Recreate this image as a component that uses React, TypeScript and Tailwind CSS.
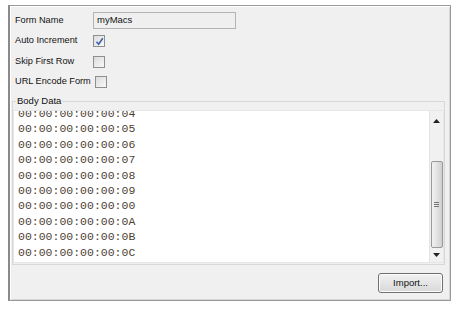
const macs = [
  '00:00:00:00:00:04',
  '00:00:00:00:00:05',
  '00:00:00:00:00:06',
  '00:00:00:00:00:07',
  '00:00:00:00:00:08',
  '00:00:00:00:00:09',
  '00:00:00:00:00:00',
  '00:00:00:00:00:0A',
  '00:00:00:00:00:0B',
  '00:00:00:00:00:0C',
];

function CheckBox({ checked }: { checked?: boolean }) {
  return (
    <div className="w-[12px] h-[12px] border border-[#8e8f8f] bg-gradient-to-br from-[#dcdcdc] to-[#f8f8f8] flex items-center justify-center">
      {checked && (
        <svg width="9" height="9" viewBox="0 0 9 9">
          <path d="M1.5 4.8 L3.6 7.2 L7.8 1.2" fill="none" stroke="#3b5ea8" strokeWidth="1.5" />
        </svg>
      )}
    </div>
  );
}

function Row({ label, children, h }: { label: string; children: React.ReactNode; h: string }) {
  return (
    <div className={`flex items-center ${h}`}>
      <div className="min-w-[78px] shrink-0 whitespace-nowrap pr-[4px] text-[9.2px] text-[#111]">{label}</div>
      {children}
    </div>
  );
}

function ScrollBar() {
  return (
    <div className="w-[14px] bg-[#f1f1f1] border-l border-[#e4e4e4] flex flex-col items-center">
      <div className="h-[19px] flex items-center justify-center">
        <svg width="7" height="4" viewBox="0 0 7 4">
          <path d="M0 4 L3.5 0 L7 4 Z" fill="#222" />
        </svg>
      </div>
      <div className="h-[31px]" />
      <div className="w-[12px] h-[87px] rounded-[2px] border border-[#999] bg-gradient-to-r from-[#f2f2f2] via-[#e2e2e2] to-[#cfcfcf] flex flex-col items-center justify-center gap-[1px]">
        <div className="w-[5px] h-px bg-[#777]" />
        <div className="w-[5px] h-px bg-[#777]" />
        <div className="w-[5px] h-px bg-[#777]" />
      </div>
      <div className="flex-1 flex items-center justify-center">
        <svg width="7" height="4" viewBox="0 0 7 4">
          <path d="M0 0 L7 0 L3.5 4 Z" fill="#222" />
        </svg>
      </div>
    </div>
  );
}

export default function App() {
  return (
    <div className="w-[465px] h-[312px] bg-white pt-[5px] pl-[8px] font-['Liberation_Sans',Arial,sans-serif]">
      <div className="w-[443px] h-[296px] bg-[#f0f0f0] border border-[#9a9a9a] border-l-2 border-l-[#8a8a8a] shadow-[inset_1px_1px_0_#ffffff,inset_-1px_-1px_0_#d6d6d6] flex flex-col">
        <div className="pl-[5px] pt-[6px]">
          <Row label="Form Name" h="h-[17px]">
            <div className="w-[143px] h-[17px] border border-[#b4b4b4] bg-[#efefef] text-[9.5px] text-[#111] pl-[3px] flex items-center">
              myMacs
            </div>
          </Row>
          <Row label="Auto Increment" h="h-[24px]">
            <CheckBox checked />
          </Row>
          <Row label="Skip First Row" h="h-[17px]">
            <CheckBox />
          </Row>
          <Row label="URL Encode Form" h="h-[24px]">
            <CheckBox />
          </Row>
        </div>
        <fieldset className="mt-[1px] ml-[2px] mr-[5px] h-[170px] border border-[#d5d9dc] px-0 pb-0 min-w-0">
          <legend className="ml-[3px] px-[1px] text-[9.5px] text-[#111] leading-[12px]">Body Data</legend>
          <div className="mt-[3px] h-[153px] bg-white border border-[#e6e6e6] flex">
            <div className="flex-1 overflow-hidden">
              <div className="-mt-[5px] pl-[4px] font-['Liberation_Mono','Courier_New',monospace] text-[11.5px] leading-[15.4px] text-[#4e4235]">
                {macs.map((m, i) => (
                  <div key={i}>{m}</div>
                ))}
              </div>
            </div>
            <ScrollBar />
          </div>
        </fieldset>
        <div className="flex justify-end pr-[7px] pt-[8px]">
          <button className="w-[65px] h-[20px] rounded-[3px] border border-[#707070] bg-gradient-to-b from-[#f2f2f2] to-[#d8d8d8] text-[9.5px] text-[#111] shadow-[inset_0_0_0_1px_#fcfcfc]">
            Import...
          </button>
        </div>
      </div>
    </div>
  );
}
